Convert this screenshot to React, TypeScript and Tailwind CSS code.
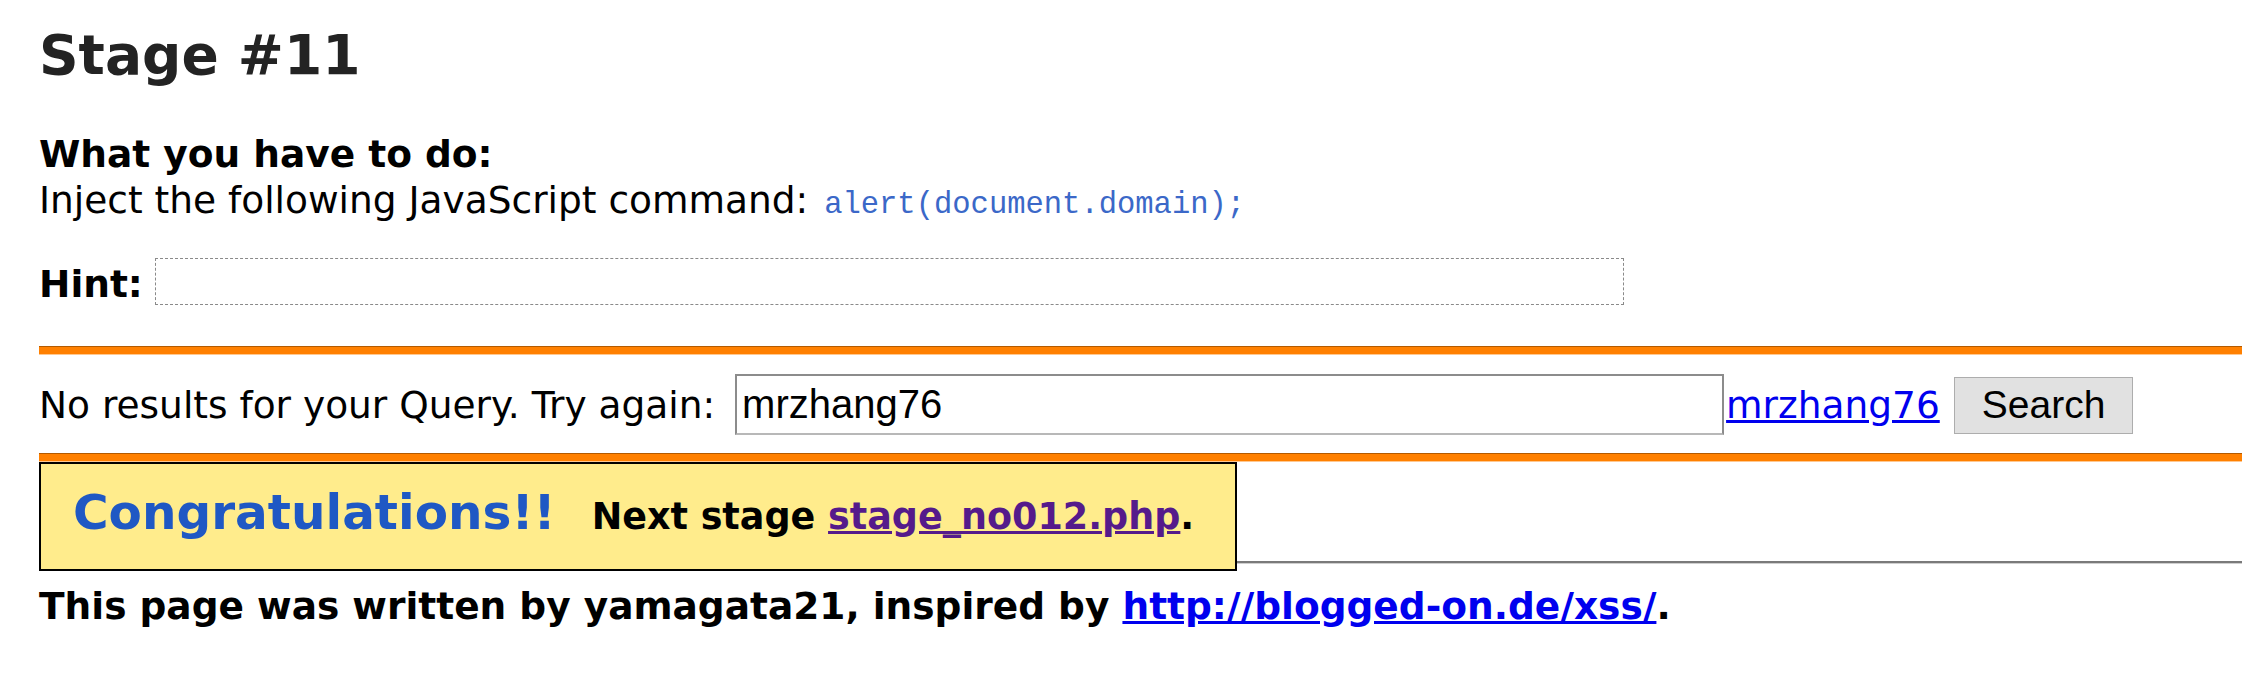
import React from "react"

const OrangeRule = () => (
  <div className="h-[9px] bg-[#ff8000] border-t border-[#b35a00] border-b border-b-[#ffc890]" />
)

const App = () => {
  return (
    <div className="min-h-screen overflow-hidden bg-white pl-[39px] font-['DejaVu_Sans',sans-serif] text-[37.5px] leading-[46px] text-black">
      <h1 className="mt-[22px] text-[55px] font-bold leading-[66px] text-[#232323]">Stage #11</h1>

      <div className="mt-[43px]">
        <div className="font-bold">What you have to do:</div>
        <div>
          Inject the following JavaScript command:{" "}
          <span className="ml-[4px] font-['Liberation_Mono',monospace] text-[30.5px] leading-[30px] text-[#3b68c8]">
            alert(document.domain);
          </span>
        </div>
      </div>

      <div className="mt-[35px] flex items-start">
        <span className="mt-[3px] font-bold">Hint:</span>
        <div className="ml-[12px] h-[47px] w-[1469px] border border-dashed border-[#8a8a8a]" />
      </div>

      <div className="mt-[39px]">
        <OrangeRule />
      </div>

      <div className="mt-[19px] flex items-baseline">
        <span className="whitespace-nowrap">No results for your Query. Try again:&nbsp;</span>
        <input
          defaultValue="mrzhang76"
          className="ml-[8px] h-[61px] w-[989px] shrink-0 border-2 border-[#8c8c8c] border-b-[#b8b8b8] px-[5px] font-['Liberation_Sans',sans-serif] text-[40px] text-black outline-none"
        />
        <a href="#" className="ml-[2px] text-[#0000ee] underline">mrzhang76</a>
        <button className="ml-[14px] h-[57px] shrink-0 border border-[#adadad] bg-[#e1e1e1] px-[27px] font-['Liberation_Sans',sans-serif] text-[39px] text-black">
          Search
        </button>
      </div>

      <div className="mt-[18px]">
        <OrangeRule />
      </div>

      <div className="flex items-end">
        <div className="h-[109px] w-[1198px] shrink-0 border-2 border-black bg-[#ffec8c] pl-[32px] pt-[20px]">
          <div className="flex items-baseline">
            <span className="text-[48.5px] font-bold leading-[56px] text-[#1f58c4]">Congratulations!!</span>
            <span className="ml-[36px] text-[36.5px] font-bold">
              Next stage <a href="#" className="text-[#551a8b] underline">stage_no012.php</a>.
            </span>
          </div>
        </div>
        <div className="mb-[7px] h-[3px] flex-1 border-t-2 border-[#7a7a7a] border-b border-b-[#cfcfcf]" />
      </div>

      <p className="mt-[12px] font-bold">
        This page was written by yamagata21, inspired by{" "}
        <a href="#" className="text-[#0000ee] underline">http://blogged-on.de/xss/</a>.
      </p>
    </div>
  )
}

export default App
